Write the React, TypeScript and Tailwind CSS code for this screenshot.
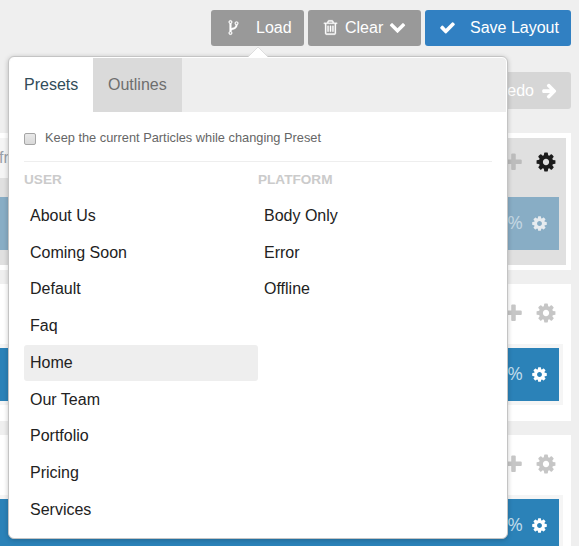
import React from "react";

const paths = {
  cog: "M1152 896q0-106-75-181t-181-75-181 75-75 181 75 181 181 75 181-75 75-181zm512-109v222q0 12-8 23t-20 13l-185 28q-19 54-39 91 35 50 107 138 10 12 10 25t-9 23q-27 37-99 108t-94 71q-12 0-26-9l-138-108q-44 23-91 38-16 136-29 186-7 28-36 28h-222q-14 0-24.5-8.5t-11.5-21.5l-28-184q-49-16-90-37l-141 107q-10 9-25 9-14 0-25-11-126-114-165-168-7-10-7-23 0-12 8-23 15-21 51-66.5t54-70.5q-27-50-41-99l-183-27q-13-2-21-12.5t-8-23.5v-222q0-12 8-23t19-13l186-28q14-46 39-92-40-57-107-138-10-12-10-24 0-10 9-23 26-36 98.5-107.5t94.5-71.5q13 0 26 10l138 107q44-23 91-38 16-136 29-186 7-28 36-28h222q14 0 24.5 8.5t11.5 21.5l28 184q49 16 90 37l142-107q9-9 24-9 13 0 25 10 129 119 165 170 7 8 7 22 0 12-8 23-15 21-51 66.5t-54 70.5q26 50 41 98l183 28q13 2 21 12.5t8 23.5z",
  plus: "M1600 736v192q0 40-28 68t-68 28h-416v416q0 40-28 68t-68 28h-192q-40 0-68-28t-28-68v-416h-416q-40 0-68-28t-28-68v-192q0-40 28-68t68-28h416v-416q0-40 28-68t68-28h192q40 0 68 28t28 68v416h416q40 0 68 28t28 68z",
  check: "M1671 566q0 40-28 68l-724 724-136 136q-28 28-68 28t-68-28l-136-136-362-362q-28-28-28-68t28-68l136-136q28-28 68-28t68 28l294 295 656-657q28-28 68-28t68 28l136 136q28 28 28 68z",
  chevron: "M1683 808l-742 741q-19 19-45 19t-45-19l-742-741q-19-19-19-45.5t19-45.5l166-165q19-19 45-19t45 19l531 531 531-531q19-19 45-19t45 19l166 165q19 19 19 45.5t-19 45.5z",
  arrow: "M1600 960q0 54-37 91l-651 651q-39 37-91 37-51 0-90-37l-75-75q-38-38-38-91t38-91l293-293h-704q-52 0-84.5-37.5t-32.5-90.5v-128q0-53 32.5-90.5t84.5-37.5h704l-293-294q-38-36-38-90t38-90l75-75q38-38 90-38 53 0 91 38l651 651q37 35 37 90z",
  trash: "M704 736v576q0 14-9 23t-23 9h-64q-14 0-23-9t-9-23v-576q0-14 9-23t23-9h64q14 0 23 9t9 23zm256 0v576q0 14-9 23t-23 9h-64q-14 0-23-9t-9-23v-576q0-14 9-23t23-9h64q14 0 23 9t9 23zm256 0v576q0 14-9 23t-23 9h-64q-14 0-23-9t-9-23v-576q0-14 9-23t23-9h64q14 0 23 9t9 23zm128 724v-948h-896v948q0 22 7 40.5t14.5 27 10.5 8.5h832q3 0 10.5-8.5t14.5-27 7-40.5zm-672-1076h448l-48-117q-7-9-17-11h-317q-10 2-17 11zm928 32v64q0 14-9 23t-23 9h-96v948q0 83-47 143.5t-113 60.5h-832q-66 0-113-58.5t-47-141.5v-952h-96q-14 0-23-9t-9-23v-64q0-14 9-23t23-9h309l70-167q15-37 54-63t79-26h320q40 0 79 26t54 63l70 167h309q14 0 23 9t9 23z",
  fork: "M672 1472q0-40-28-68t-68-28-68 28-28 68 28 68 68 28 68-28 28-68zm0-1152q0-40-28-68t-68-28-68 28-28 68 28 68 68 28 68-28 28-68zm640 128q0-40-28-68t-68-28-68 28-28 68 28 68 68 28 68-28 28-68zm96 0q0 52-26 96.5t-70 69.5q-2 287-226 414-67 38-203 81-128 40-169.5 71t-41.5 100v26q44 25 70 69.5t26 96.5q0 80-56 136t-136 56-136-56-56-136q0-52 26-96.5t70-69.5v-820q-44-25-70-69.5t-26-96.5q0-80 56-136t136-56 136 56 56 136q0 52-26 96.5t-70 69.5v497q54-26 154-57 55-17 87.5-29.5t70.5-31 59-39.5 40.5-51 28-69.5 8.5-91.5q-44-25-70-69.5t-26-96.5q0-80 56-136t136-56 136 56 56 136z",
};

function Icon({ name, className }: { name: keyof typeof paths; className: string }) {
  return (
    <svg viewBox="0 0 1792 1792" fill="currentColor" className={`shrink-0 ${className}`}>
      <path d={paths[name]} />
    </svg>
  );
}

function Tools({ active }: { active?: boolean }) {
  return (
    <div className="flex items-center justify-end gap-[11px] text-[#c6c6c6]">
      <Icon name="plus" className="size-[21px]" />
      <Icon name="cog" className={active ? "size-[22px] text-[#1c1c1c]" : "size-[22px]"} />
    </div>
  );
}

function Block({ faded }: { faded?: boolean }) {
  return (
    <div
      className={`flex h-[53px] items-center justify-end gap-2 pr-[11px] ${
        faded ? "bg-[#88adc5] text-[#e6ebef]" : "bg-[#2b82b8] text-white"
      }`}
    >
      <span className={`pb-[3px] font-['Open_Sans',sans-serif] text-[19px] ${faded ? "text-[#c3d6e2]" : "text-[#bfdaea]"}`}>100%</span>
      <Icon name="cog" className="size-[17px]" />
    </div>
  );
}

function Section() {
  return (
    <section className="mb-3.5 mr-2 h-[137px] shrink-0 bg-white pr-2">
      <div className="flex h-[60px] flex-col justify-center pb-0.5 pr-1.5">
        <Tools />
      </div>
      <div className="bg-[#f5f5f5] py-1 pr-1">
        <Block />
      </div>
    </section>
  );
}

function Column({ title, items }: { title: string; items: string[] }) {
  return (
    <div className="w-[234px]">
      <h3 className="h-[25.9px] text-[13.6px] font-bold leading-4 text-[#cbcbcb]">{title}</h3>
      <ul className="flex flex-col gap-[0.75px]">
        {items.map((item) => (
          <li
            key={item}
            className={`h-9 rounded-[3px] pl-1.5 text-base leading-9 text-[#222] ${item === "Home" ? "bg-[#eee]" : ""}`}
          >
            {item}
          </li>
        ))}
      </ul>
    </div>
  );
}

export default function App() {
  return (
    <div className="relative flex h-[546px] w-[579px] flex-col overflow-hidden bg-[#efefef] font-['Liberation_Sans',Arial,sans-serif]">
      <header className="flex justify-end gap-1 pr-2 pt-2.5 text-base text-white">
        <button className="flex h-9 w-[93px] items-center rounded-[3px] bg-[#999] pl-3.5">
          <Icon name="fork" className="mb-0.5 size-[17px] stroke-current stroke-[30px]" />
          <span className="ml-3.5">Load</span>
        </button>
        <button className="flex h-9 w-[113px] items-center rounded-[3px] bg-[#999] pl-3.5">
          <Icon name="trash" className="mb-0.5 size-[17px] stroke-current stroke-[30px]" />
          <span className="ml-1.5">Clear</span>
          <Icon name="chevron" className="mb-[3px] ml-1.5 size-[17px]" />
        </button>
        <button className="flex h-9 w-[146px] items-center rounded-[3px] bg-[#3180c2] pl-3.5">
          <Icon name="check" className="mb-0.5 size-[17px]" />
          <span className="ml-3.5">Save Layout</span>
        </button>
      </header>

      <div className="flex justify-end pr-2 pt-[26px] text-base">
        <button className="flex h-[37px] w-[92px] items-center justify-end rounded-[3px] bg-[#d6d6d6] pr-[13px] text-white">
          <span>Redo</span>
          <Icon name="arrow" className="ml-[7px] size-[17px]" />
        </button>
      </div>

      <main className="flex flex-col pt-6">
        <section className="mb-3.5 mr-2 h-[137px] shrink-0 bg-white py-[5px] pr-[5px]">
          <div className="h-[127px] bg-[#e0e0e0] pr-[7px]">
            <div className="flex h-[59px] items-start justify-between">
              <span className="-ml-px h-10 w-[60px] bg-[#f5f5f5] text-base leading-[39px] text-[#999fa8]">fr</span>
              <div className="pr-0.5 pt-[13px] [&>div>svg:first-child]:text-[#bcbcbc]">
                <Tools active />
              </div>
            </div>
            <Block faded />
          </div>
        </section>
        <Section />
        <Section />
      </main>

      <div className="absolute left-2 top-14 h-[483px] w-[500px] rounded-[6px] border border-[#c4c4c4] bg-white p-px shadow-[0_1px_5px_rgba(0,0,0,0.22)]">
        <svg viewBox="0 0 22 11" className="absolute -top-2.5 left-[238px] h-[11px] w-[22px]">
          <path d="M1 10 11 0 21 10V11H1Z" fill="#fff" />
          <path d="M1 10 11 0 21 10" fill="none" stroke="#d2d2d2" strokeWidth="0.7" />
        </svg>
        <nav className="flex h-[54px] rounded-t bg-[#eee] text-base leading-[54px]">
          <span className="w-[83px] rounded-tl bg-white pl-3.5 text-[#314c59]">Presets</span>
          <span className="w-[89px] bg-[#dadada] pl-[15px] text-[#6e6e6e]">Outlines</span>
        </nav>
        <div className="px-3.5">
          <label className="flex h-[50px] items-center border-b border-[#eee] text-[#666]">
            <span className="mt-[5px] size-3 rounded-[2px] border border-[#a5a5a5] bg-linear-to-b from-[#e9e9e9] to-[#d9d9d9]" />
            <span className="ml-[9px] pt-[3px] text-[12.8px]">Keep the current Particles while changing Preset</span>
          </label>
          <div className="flex pt-2.5">
            <Column
              title="USER"
              items={["About Us", "Coming Soon", "Default", "Faq", "Home", "Our Team", "Portfolio", "Pricing", "Services"]}
            />
            <Column title="PLATFORM" items={["Body Only", "Error", "Offline"]} />
          </div>
        </div>
      </div>
    </div>
  );
}
